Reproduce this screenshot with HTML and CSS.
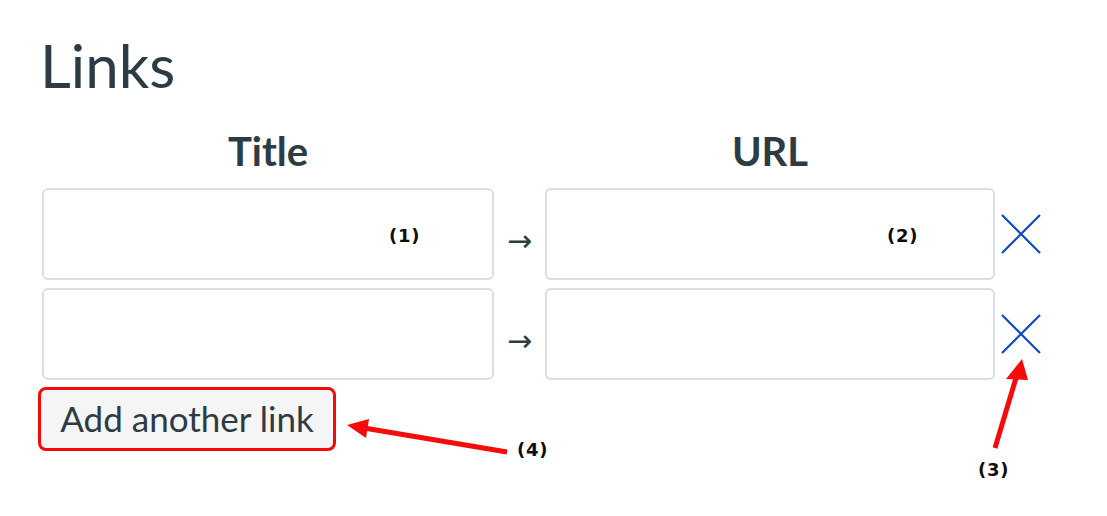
FILE: index.html
```html
<!DOCTYPE html>
<html lang="en">
<head>
<meta charset="utf-8">
<title>Links</title>
<link rel="stylesheet" href="styles.css">
</head>
<body>
<main class="page">
  <h1 class="heading">Links</h1>
  <div class="links-grid">
    <div class="col-head">Title</div>
    <div></div>
    <div class="col-head">URL</div>
    <div></div>

    <div class="field"></div>
    <div class="arrow">→</div>
    <div class="field"></div>
    <button class="remove" aria-label="Remove link">
      <svg viewBox="0 0 40 40" width="40" height="40"><path d="M1 1 L39 39 M39 1 L1 39" /></svg>
    </button>

    <div class="field"></div>
    <div class="arrow">→</div>
    <div class="field"></div>
    <button class="remove" aria-label="Remove link">
      <svg viewBox="0 0 40 40" width="40" height="40"><path d="M1 1 L39 39 M39 1 L1 39" /></svg>
    </button>
  </div>
  <button class="add-btn">Add another link</button>

  <div class="annotations">
    <svg class="ann-svg" width="1107" height="516" viewBox="0 0 1107 516">
      <line x1="507" y1="452" x2="364" y2="428" class="ann-line"/>
      <polygon points="347,425 369,419 366,438" class="ann-head"/>
      <line x1="995" y1="448" x2="1016" y2="378" class="ann-line"/>
      <polygon points="1022,359 1028,380 1006,379" class="ann-head"/>
    </svg>
    <span class="tag tag-1">(1)</span>
    <span class="tag tag-2">(2)</span>
    <span class="tag tag-3">(3)</span>
    <span class="tag tag-4">(4)</span>
  </div>
</main>
</body>
</html>
```

FILE: styles.css
```css
html, body {
  margin: 0;
  padding: 0;
  background: #ffffff;
}

.page {
  position: relative;
  width: 1107px;
  height: 516px;
  box-sizing: border-box;
  padding: 29px 0 0 40px;
  font-family: "Lato", "Liberation Sans", sans-serif;
  color: #2d3b45;
}

.heading {
  margin: 0;
  font-size: 60px;
  line-height: 72px;
  font-weight: 400;
}

.links-grid {
  margin-top: 27px;
  margin-left: 2px;
  display: grid;
  grid-template-columns: 452px 51px 450px 46px;
  row-gap: 8px;
}

.col-head {
  font-size: 40px;
  line-height: 46px;
  font-weight: 700;
  text-align: center;
  margin-bottom: 6px;
}

.field {
  height: 92px;
  box-sizing: border-box;
  border: 2px solid #d9dee4;
  border-radius: 6px;
  background: #fff;
}

.arrow {
  display: flex;
  align-items: center;
  justify-content: center;
  font-family: "DejaVu Sans", sans-serif;
  font-size: 30px;
  color: #2d3b45;
  padding-top: 12px;
}

.remove {
  display: flex;
  align-items: center;
  justify-content: flex-end;
  background: none;
  border: 0;
  padding: 0;
  margin: 0;
}

.remove svg {
  display: block;
}

.remove path {
  stroke: #0c49c2;
  stroke-width: 2.2;
  fill: none;
}

.add-btn {
  margin: 7px 0 0 -2px;
  display: block;
  width: 298px;
  height: 64px;
  box-sizing: border-box;
  border: 3px solid #f20a0a;
  border-radius: 8px;
  background: #f5f5f5;
  font-family: "Lato", "Liberation Sans", sans-serif;
  font-size: 35px;
  color: #2d3b45;
  padding: 0 0 2px 0;
  text-align: center;
}

.annotations {
  position: absolute;
  left: 0;
  top: 0;
  width: 1107px;
  height: 516px;
  pointer-events: none;
}

.ann-svg {
  position: absolute;
  left: 0;
  top: 0;
}

.ann-line {
  stroke: #f50b0b;
  stroke-width: 5;
}

.ann-head {
  fill: #f50b0b;
}

.tag {
  position: absolute;
  font-family: "DejaVu Sans", sans-serif;
  font-weight: 700;
  font-size: 18px;
  letter-spacing: 0.8px;
  line-height: 20px;
  color: #0d0d0d;
}

.tag-1 { left: 389px; top: 226px; }
.tag-2 { left: 887px; top: 226px; }
.tag-3 { left: 978px; top: 460px; }
.tag-4 { left: 517px; top: 440px; }
```
